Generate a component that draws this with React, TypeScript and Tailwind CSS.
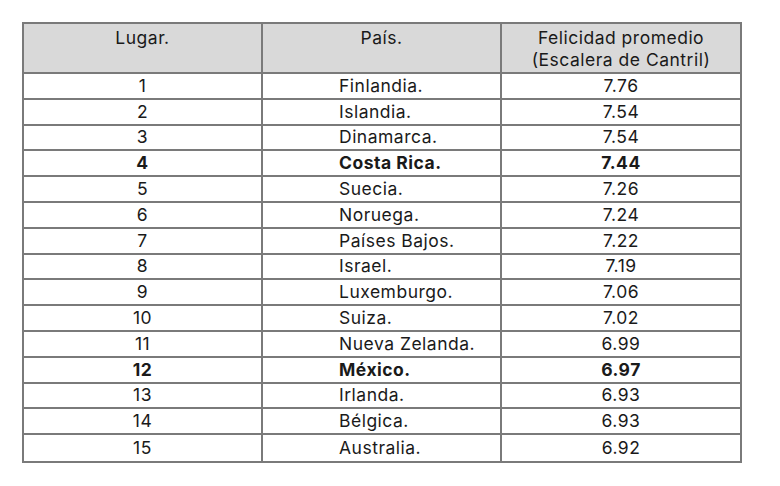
import React from "react";

const rows: [string, string, string, boolean][] = [
  ["1", "Finlandia.", "7.76", false],
  ["2", "Islandia.", "7.54", false],
  ["3", "Dinamarca.", "7.54", false],
  ["4", "Costa Rica.", "7.44", true],
  ["5", "Suecia.", "7.26", false],
  ["6", "Noruega.", "7.24", false],
  ["7", "Países Bajos.", "7.22", false],
  ["8", "Israel.", "7.19", false],
  ["9", "Luxemburgo.", "7.06", false],
  ["10", "Suiza.", "7.02", false],
  ["11", "Nueva Zelanda.", "6.99", false],
  ["12", "México.", "6.97", true],
  ["13", "Irlanda.", "6.93", false],
  ["14", "Bélgica.", "6.93", false],
  ["15", "Australia.", "6.92", false],
];

export default function App() {
  return (
    <div
      className="w-[780px] h-[486px] bg-white pt-[22px] pl-[22px] text-[#1a1a1a]"
      style={{ fontFamily: "Inter, 'Noto Sans', sans-serif" }}
    >
      <div className="w-[720px] border-2 border-[#7a7a7a] text-[17.5px] tracking-[0.5px]">
        <div className="flex h-[50px] bg-[#d9d9d9] border-b-2 border-[#7a7a7a] leading-[22px]">
          <div className="w-[239px] border-r-2 border-[#7a7a7a] text-center pt-[3px]">Lugar.</div>
          <div className="w-[239px] border-r-2 border-[#7a7a7a] text-center pt-[3px]">País.</div>
          <div className="flex-1 text-center pt-[3px]">
            Felicidad promedio
            <br />
            (Escalera de Cantril)
          </div>
        </div>
        {rows.map(([n, c, v, b], i) => (
          <div
            key={n}
            className={`flex h-[25.8px] items-center ${i < rows.length - 1 ? "border-b-2 border-[#7a7a7a]" : ""} ${b ? "font-bold" : ""}`}
          >
            <div className="w-[239px] h-full border-r-2 border-[#7a7a7a] flex items-center justify-center">{n}</div>
            <div className="w-[239px] h-full border-r-2 border-[#7a7a7a] flex items-center pl-[76px]">{c}</div>
            <div className="flex-1 h-full flex items-center justify-center">{v}</div>
          </div>
        ))}
      </div>
    </div>
  );
}
